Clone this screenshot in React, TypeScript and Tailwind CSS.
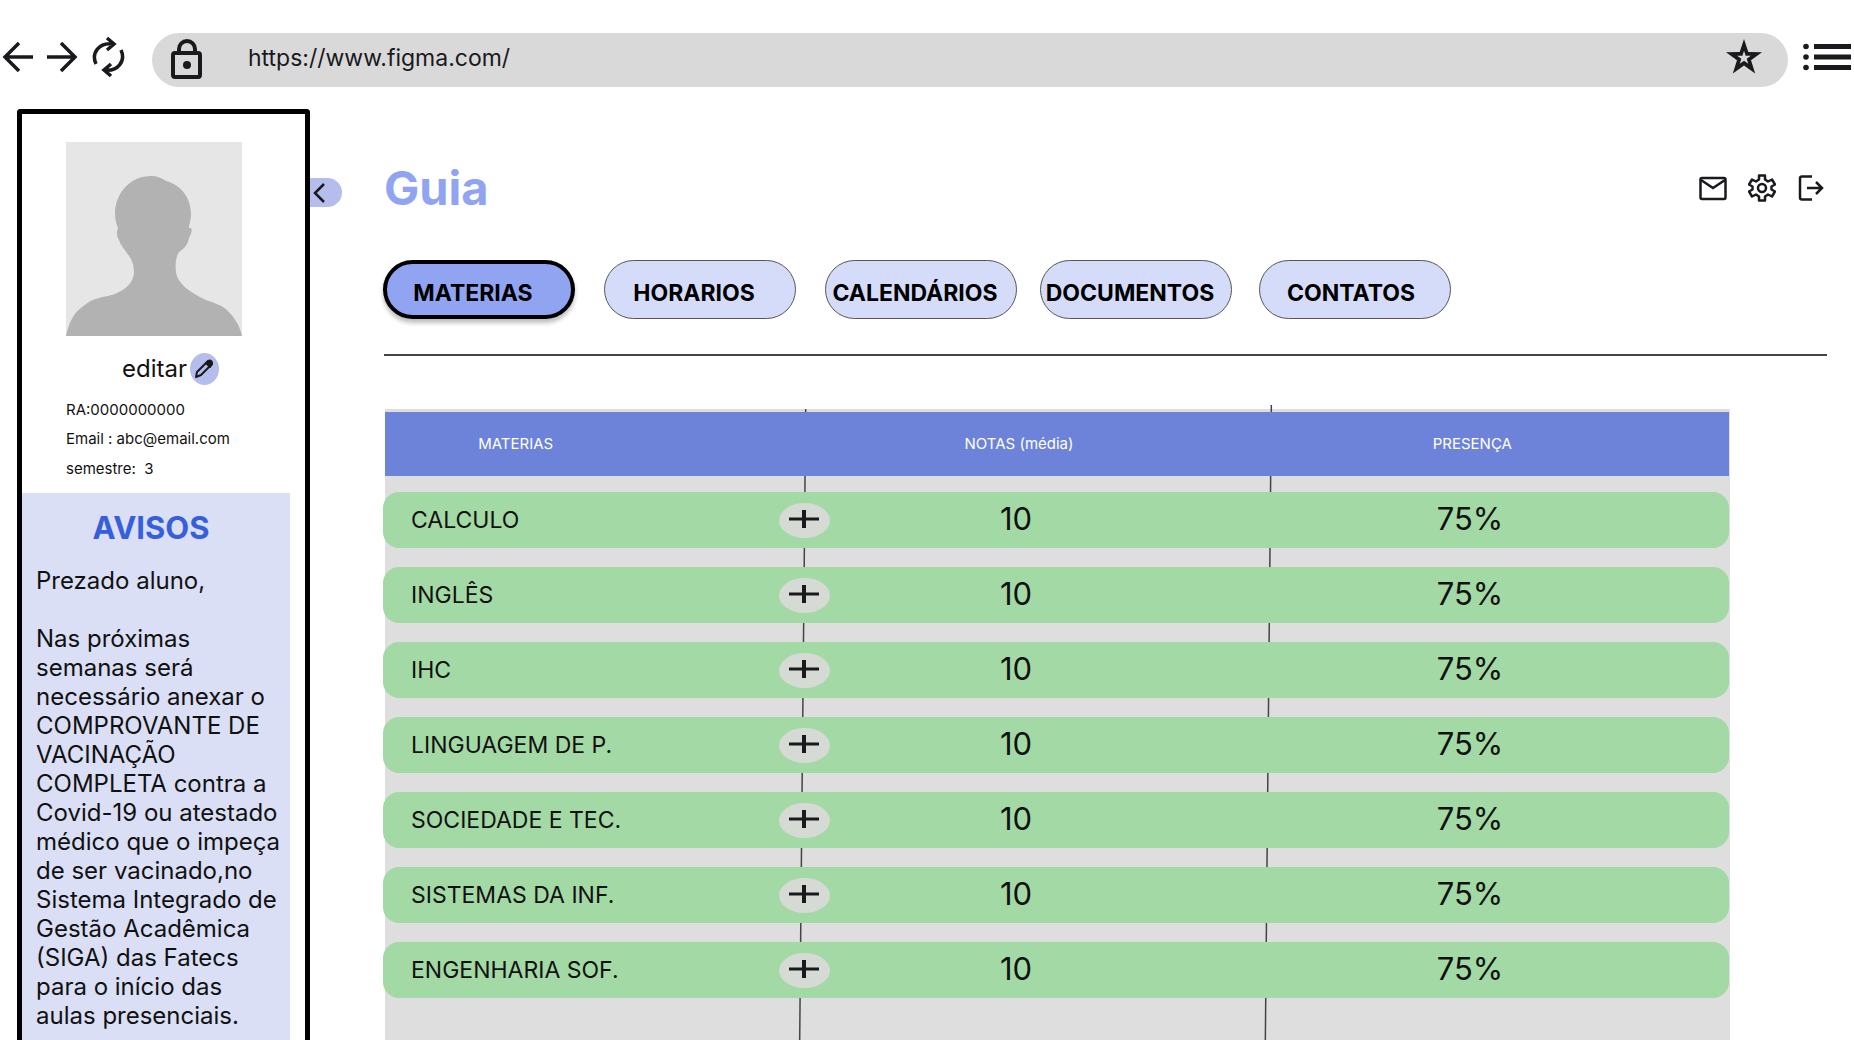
import { useState } from 'react'

const tabs = [
  { label: 'MATERIAS', space: 'mr-[29px] pr-3' },
  { label: 'HORARIOS', space: 'mr-[29px] pr-3' },
  { label: 'CALENDÁRIOS', space: 'mr-[23px] pr-3' },
  { label: 'DOCUMENTOS', space: 'mr-[27px] pr-3' },
  { label: 'CONTATOS', space: 'pr-2' },
]

const subjects = [
  { name: 'CALCULO', grade: 10, presence: '75%' },
  { name: 'INGLÊS', grade: 10, presence: '75%' },
  { name: 'IHC', grade: 10, presence: '75%' },
  { name: 'LINGUAGEM DE P.', grade: 10, presence: '75%' },
  { name: 'SOCIEDADE E TEC.', grade: 10, presence: '75%' },
  { name: 'SISTEMAS DA INF.', grade: 10, presence: '75%' },
  { name: 'ENGENHARIA SOF.', grade: 10, presence: '75%' },
]

const columns = 'grid grid-cols-[422fr_462fr_462fr] items-center'

const star = 'M19 1l4.300 13.100 13.700.1-11 8.100 4.200 13.100L19 27.500 7.800 35.400 12 22.300 1 14.200l13.700-.1z'

function BrowserBar() {
  return (
    <header className="flex h-[87px] items-end text-[#1a191d]">
      <div className="flex h-[54px] w-[152px] shrink-0 items-center pl-[2px]">
        <button aria-label="Voltar">
          <svg width="32" height="48" viewBox="0 0 32 48" fill="none" stroke="currentColor" strokeWidth="3.500">
            <path d="M31 21H4M17 7L3 21l14 14" />
          </svg>
        </button>
        <button aria-label="Avançar" className="ml-3">
          <svg width="32" height="48" viewBox="0 0 32 48" fill="none" stroke="currentColor" strokeWidth="3.500">
            <path d="M1 21h27M15 7l14 14-14 14" />
          </svg>
        </button>
        <button aria-label="Recarregar" className="ml-3">
          <svg width="36" height="48" viewBox="0 0 36 48" fill="none" stroke="currentColor" strokeWidth="3.500">
            <path d="M6 28C1 17 9 6 23 8M17 2l7 6-7 6M31 14c5 11-3 22-17 20M21 28l-7 6 7 6" />
          </svg>
        </button>
      </div>
      <div className="flex h-[54px] flex-1 items-center rounded-full bg-[#d9d9d9] pr-[25px] pl-[18px]">
        <svg width="34" height="42" viewBox="0 0 34 42" fill="none" stroke="currentColor" strokeWidth="4">
          <rect x="3" y="14" width="27" height="24" rx="2" />
          <path d="M9 14v-4a8 8 0 0 1 16 0v4" />
          <circle cx="17" cy="26" r="4" fill="currentColor" stroke="none" />
        </svg>
        <input
          aria-label="Endereço"
          className="ml-11 min-w-0 flex-1 bg-transparent pb-1 text-[23px] outline-none"
          defaultValue="https://www.figma.com/"
        />
        <button aria-label="Favoritar">
          <svg width="38" height="44" viewBox="0 0 38 44" fill="currentColor">
            <path d={star} />
            <path d={star} fill="#d9d9d9" transform="translate(11.800 12.400) scale(.38)" />
          </svg>
        </button>
      </div>
      <button aria-label="Menu" className="ml-[14px] flex h-[54px] w-[52px] shrink-0 items-center">
        <svg width="50" height="36" viewBox="0 0 50 36" fill="currentColor">
          <circle cx="4" cy="4.500" r="2.800" />
          <circle cx="4" cy="15" r="2.800" />
          <circle cx="4" cy="25.500" r="2.800" />
          <path d="M12 2h37v5H12zM12 12.500h37v5H12zM12 23h37v5H12z" />
        </svg>
      </button>
    </header>
  )
}

function Sidebar() {
  return (
    <aside className="relative mt-[22px] ml-[17px] flex w-[293px] shrink-0 flex-col rounded-t-[4px] border-5 border-b-0 border-black">
      <div className="px-11 pt-7">
        <svg className="bg-[#e6e6e6]" width="176" height="194" viewBox="0 0 176 194" role="img" aria-label="Foto do aluno">
          <path
            fill="#b2b2b2"
            d="M0 194C3 180 8 171 16 165C22 160 27 157 33 156C40 154 45 154 51 151C60 147 68 140 68 130C68 120 64 115 58 107C55 103 54 101 53 98C51 95 50 90 52 86C50 81 49 77 49 70C50 50 65 34 85 34C91 34 96 36 100 39C116 43 125 57 125 72C125 79 123 82 123 86C128 85 125 92 123 96C122 102 119 106 113 110C110 115 109 122 110 130C111 141 123 150 140 158C149 161 157 164 161 168C168 175 173 182 176 194Z"
          />
        </svg>
        <div className="mt-[17px] flex items-center gap-[3px] pl-14">
          <span className="text-2xl">editar</span>
          <button aria-label="Editar perfil" className="flex h-8 w-[29px] shrink-0 items-center justify-center rounded-[50%] bg-[#b4bdec]">
            <svg width="20" height="20" viewBox="0 0 20 20" fill="none" stroke="#1a191d" strokeWidth="2" strokeLinejoin="round">
              <path d="M2 18l1-5L14 2q2-1 3 0t1 3L7 16z" />
              <path d="M12 4l4 4 2-3q0-3-3-3z" fill="#1a191d" />
            </svg>
          </button>
        </div>
        <p className="mt-[13px] text-[15px] leading-6">RA:0000000000</p>
        <p className="mt-[5px] text-[15px] leading-6">Email : abc@email.com</p>
        <p className="mt-[6px] text-[15px] leading-6 whitespace-pre">semestre:  3</p>
      </div>
      <section className="mt-3 mr-[15px] flex-1 bg-[#dadff5] pr-1 pl-[14px]">
        <h2 className="pt-[15px] pr-5 text-center text-[31px] leading-10 font-bold text-[#355fdb]">AVISOS</h2>
        <p className="mt-[18px] text-2xl leading-[29px]">Prezado aluno,</p>
        <p className="mt-[29px] text-2xl leading-[29px]">
          Nas próximas semanas será necessário anexar o COMPROVANTE DE VACINAÇÃO COMPLETA contra a Covid-19 ou
          atestado médico que o impeça de ser vacinado,no Sistema Integrado de Gestão Acadêmica (SIGA) das Fatecs
          para o início das aulas presenciais.
        </p>
      </section>
      <button aria-label="Recolher" className="absolute top-16 left-full ml-[5px] h-[29px] w-8 rounded-r-full bg-[#b4bdec] pl-[2px]">
        <svg width="14" height="20" viewBox="0 0 14 20" fill="none" stroke="#1a191d" strokeWidth="2.500">
          <path d="M12 1l-9 9 9 9" />
        </svg>
      </button>
    </aside>
  )
}

function Actions() {
  return (
    <div className="flex items-center gap-[21px] pr-[2px] text-[#1a191d]">
      <button aria-label="Mensagens">
        <svg width="28" height="28" viewBox="0 0 28 28" fill="none" stroke="currentColor" strokeWidth="2.500">
          <rect x="1.500" y="4" width="25" height="21" rx="1.500" />
          <path d="M2 6l12 8 12-8" />
        </svg>
      </button>
      <button aria-label="Configurações">
        <svg width="28" height="28" viewBox="0 0 28 28" fill="none" stroke="currentColor" strokeWidth="2.500" strokeLinejoin="round">
          <path d="M11 1.500h6v4l3 2 4-2 3 5-3.500 2v3l3.500 2-3 5-4-2-3 2v4h-6v-4l-3-2-4 2-3-5 3.500-2v-3L1 10.500l3-5 4 2 3-2z" />
          <circle cx="14" cy="14" r="4" />
        </svg>
      </button>
      <button aria-label="Sair">
        <svg width="28" height="28" viewBox="0 0 28 28" fill="none" stroke="currentColor" strokeWidth="2.500">
          <path d="M15 2.500H5q-2 0-2 2v19q0 2 2 2h10M10 14h15M19 8l6 6-6 6" />
        </svg>
      </button>
    </div>
  )
}

function SubjectTable() {
  return (
    <div className="relative mr-[97px] ml-px flex-1 bg-[#dedede] pt-[3px]">
      {/* column rules, hidden under the header and the rows */}
      <svg
        className="absolute -top-1 left-0 h-[calc(100%+4px)] w-full"
        viewBox="0 0 1346 635"
        preserveAspectRatio="none"
        stroke="#444"
        strokeWidth="1.500"
      >
        <path d="M421 4L415 635M887 0L881 635" />
      </svg>
      <table className="relative mr-px block">
        <thead className="block bg-[#6d83d9] text-white">
          <tr className={`${columns} h-16`}>
            <th className="pr-40 text-[15px] font-normal">MATERIAS</th>
            <th className="pr-9 text-[15px] font-normal">NOTAS (média)</th>
            <th className="pr-13 text-[15px] font-normal">PRESENÇA</th>
          </tr>
        </thead>
        <tbody className="-ml-[2px] flex flex-col gap-[19px] pt-4">
          {subjects.map((s) => (
            <tr key={s.name} className={`${columns} h-14 rounded-2xl bg-[#a3d9a5]`}>
              <td className="flex items-center justify-between pl-7 text-[23px]">
                {s.name}
                <button
                  aria-label={`Detalhes de ${s.name}`}
                  className="-mr-[25px] flex h-[35px] w-[51px] items-center justify-center rounded-[50%] bg-[#d5dad5] pr-[2px] pb-[3px]"
                >
                  <svg width="30" height="18" viewBox="0 0 30 18" stroke="#1a191d">
                    <path d="M0 9h30" strokeWidth="3" />
                    <path d="M15 0v18" strokeWidth="4" />
                  </svg>
                </button>
              </td>
              <td className="pr-10 pb-px text-center text-[31px]">{s.grade}</td>
              <td className="pr-14 pb-px text-center text-[31px]">{s.presence}</td>
            </tr>
          ))}
        </tbody>
      </table>
    </div>
  )
}

export default function App() {
  const [active, setActive] = useState('MATERIAS')

  return (
    <div className="flex min-h-screen flex-col bg-white font-['Inter',sans-serif] text-[#111]">
      <BrowserBar />
      <div className="flex flex-1">
        <Sidebar />
        <main className="flex min-w-0 flex-1 flex-col pt-[72px] pr-[27px] pl-[74px]">
          <div className="flex items-center justify-between">
            <h1 className="text-[47px] leading-[58px] font-bold text-[#91a4f2]">Guia</h1>
            <Actions />
          </div>
          <nav className="mt-[43px] -ml-px flex">
            {tabs.map((t) => (
              <button
                key={t.label}
                onClick={() => setActive(t.label)}
                className={`flex h-[59px] w-48 items-center justify-center rounded-full pt-2 text-[23px] font-bold text-black ${t.space} ${
                  active === t.label
                    ? 'border-4 border-black bg-[#91a4f2] shadow-[0_4px_4px_rgba(0,0,0,0.25)]'
                    : 'border border-[#555] bg-[#d5dcf9]'
                }`}
              >
                {t.label}
              </button>
            ))}
          </nav>
          <hr className="mt-[35px] mb-[53px] border-t-2 border-[#444]" />
          <SubjectTable />
        </main>
      </div>
    </div>
  )
}
